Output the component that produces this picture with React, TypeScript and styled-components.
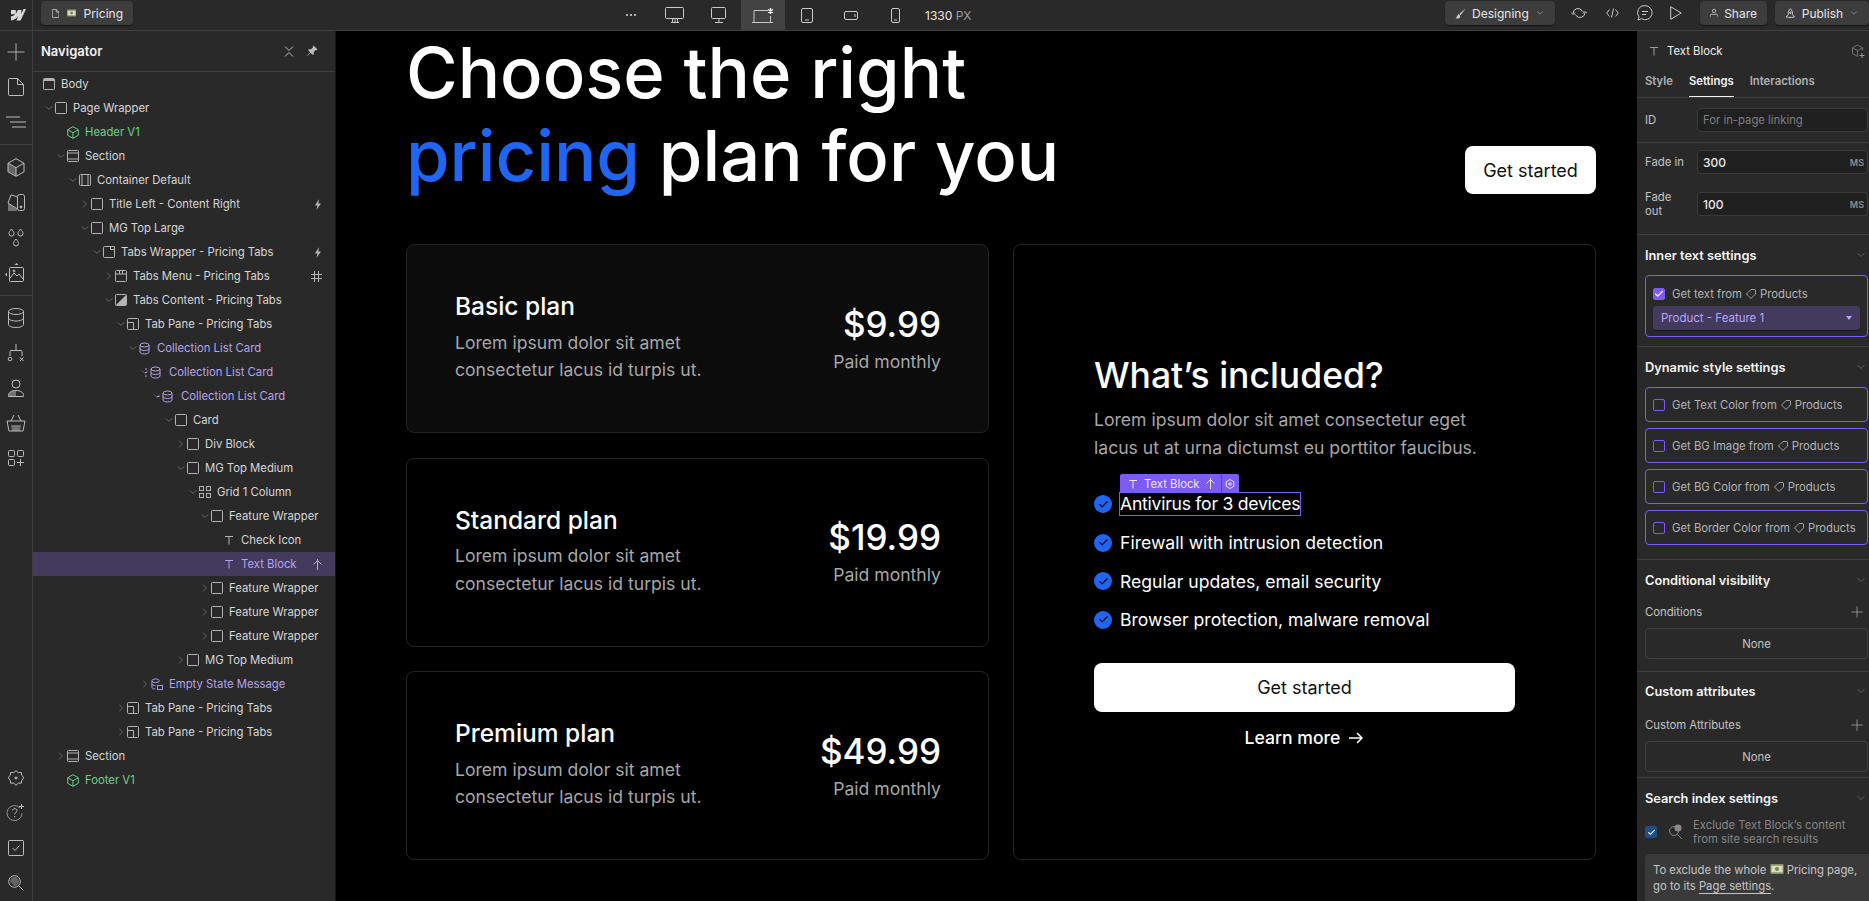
import { FC, ReactNode } from 'react';
import styled, { createGlobalStyle } from 'styled-components';
import { Check, ChevronDown, ChevronRight, Plus } from 'lucide-react';

const GlobalStyle = createGlobalStyle`
    html, body { margin: 0; padding: 0; background: #000; overflow: hidden; }
    * { box-sizing: border-box; }
    body { font-family: Inter, "Liberation Sans", sans-serif; font-size: 12px; color: #d9d9d9; }
`;

const Colors = {
    panel: '#292929',
    line: '#3f3f3f',
    purple: '#7c5cf5',
    lilac: '#b5a3ec',
    green: '#69cf8c',
    blue: '#1f66f5',
};

const Page = styled.div`
    width: 1869px;
    height: 901px;
    display: flex;
    flex-direction: column;
    overflow: hidden;
`;

/* top bar */
const TopBar = styled.header`
    height: 31px;
    flex: none;
    display: flex;
    align-items: stretch;
    background: ${Colors.panel};
    border-bottom: 1px solid ${Colors.line};
`;
const Logo = styled.div`
    width: 33px;
    display: flex;
    align-items: center;
    justify-content: center;
    border-right: 1px solid ${Colors.line};
    color: #d8d8d8;
`;
const Raised = styled.div<{ $w: number }>`
    width: ${p => p.$w}px;
    height: 24px;
    margin-top: 1px;
    display: flex;
    align-items: center;
    gap: 6px;
    padding: 0 10px;
    background: #3d3d3d;
    border-radius: 4px;
    box-shadow: 0 1px 1px rgba(0, 0, 0, 0.5);
    color: #e6e6e6;
    flex: none;
`;
const PageButton = styled(Raised)`
    margin-left: 8px;
    padding-left: 11px;
    gap: 7.5px;
`;
const Devices = styled.div`
    display: flex;
    margin-left: 476px;
    align-items: stretch;
`;
const DeviceButton = styled.div<{ $active?: boolean }>`
    width: 44px;
    display: flex;
    align-items: center;
    justify-content: center;
    color: #c9c9c9;
    background: ${p => (p.$active ? '#434343' : 'transparent')};
`;
const WidthLabel = styled.div`
    margin-left: 8px;
    align-self: center;
    color: #e6e6e6;
    span { color: #9a9a9a; }
`;
const TopRight = styled.div`
    margin-left: auto;
    display: flex;
    align-items: flex-start;
`;
const ToolIcon = styled.div<{ $w: number }>`
    width: ${p => p.$w}px;
    height: 26px;
    display: flex;
    align-items: center;
    justify-content: center;
    color: #c9c9c9;
`;
const ShareButton = styled(Raised)`
    margin-left: 17px;
    margin-right: 8px;
`;
const ButtonLabel = styled.span`
    flex: 1;
`;

/* main area */
const Main = styled.div`
    flex: 1;
    min-height: 0;
    display: flex;
`;
const Rail = styled.nav`
    width: 33px;
    flex: none;
    display: flex;
    flex-direction: column;
    background: ${Colors.panel};
    border-right: 1px solid ${Colors.line};
`;
const RailGroup = styled.div<{ $top: number; $bottom: number; $end?: boolean; $last?: boolean }>`
    padding: ${p => p.$top}px 0 ${p => p.$bottom}px;
    border-bottom: ${p => (p.$last ? 'none' : `1px solid ${Colors.line}`)};
    margin-top: ${p => (p.$end ? 'auto' : '0')};
`;
const RailIcon = styled.div`
    height: 35px;
    display: flex;
    align-items: center;
    justify-content: center;
    color: #bdbdbd;
`;

/* navigator */
const Navigator = styled.aside`
    width: 303px;
    flex: none;
    background: ${Colors.panel};
    border-right: 1px solid #171717;
    font-size: 11.3px;
`;
const NavHeader = styled.div`
    height: 41px;
    display: flex;
    align-items: center;
    padding: 0 17px 0 8px;
    border-bottom: 1px solid ${Colors.line};
    gap: 12px;
    color: #bcbcbc;
`;
const NavTitle = styled.div`
    flex: 1;
    font-size: 13px;
    font-weight: 600;
    color: #f2f2f2;
`;
const Tree = styled.div``;
const Row = styled.div<{ $depth: number; $selected?: boolean; $tone: string }>`
    height: 24px;
    display: flex;
    align-items: center;
    padding-left: ${p => 10 + 12 * p.$depth}px;
    padding-right: 13px;
    background: ${p => (p.$selected ? '#433a5e' : 'transparent')};
    color: ${p => p.$tone};
    white-space: nowrap;
`;
const Caret = styled.div`
    width: 12px;
    margin-left: -12px;
    flex: none;
    display: flex;
    align-items: center;
    justify-content: center;
    color: #a3a3a3;
`;
const NodeIcon = styled.div<{ $muted?: boolean }>`
    width: 12px;
    height: 14px;
    margin-right: 6px;
    display: flex;
    align-items: center;
    justify-content: center;
    flex: none;
    color: ${p => (p.$muted ? '#b4b4b4' : 'inherit')};
`;
const Outdent = styled.span`
    margin-left: -6px;
    display: flex;
`;
const NodeLabel = styled.div`
    flex: 1;
    padding-bottom: 1px;
`;
const Badge = styled.div`
    color: #b5b5b5;
    display: flex;
`;

/* canvas */
const Canvas = styled.main`
    width: 1301px;
    flex: none;
    background: #000;
    padding: 0 41px 0 70px;
    overflow: hidden;
    color: #fff;
`;
const Hero = styled.div`
    display: flex;
    justify-content: space-between;
    align-items: flex-end;
    margin-bottom: 47px;
`;
const Headline = styled.h1`
    margin: 0;
    font-size: 70.5px;
    line-height: 83px;
    font-weight: 450;
    color: #fff;
    span { color: ${Colors.blue}; }
`;
const WhiteButton = styled.div<{ $w: string; $h: number }>`
    width: ${p => p.$w};
    height: ${p => p.$h}px;
    background: #fff;
    color: #111;
    border-radius: 8px;
    font-size: 18px;
    display: flex;
    align-items: center;
    justify-content: center;
`;
const HeroButton = styled(WhiteButton)`
    margin-bottom: 3px;
`;
const Plans = styled.div`
    display: grid;
    grid-template-columns: 583px 583px;
    gap: 24px;
`;
const PlanStack = styled.div`
    display: flex;
    flex-direction: column;
    gap: 24.5px;
`;
const PlanCard = styled.div<{ $filled?: boolean }>`
    height: 189px;
    padding: 0 47px 0 48px;
    display: flex;
    align-items: center;
    justify-content: space-between;
    background: ${p => (p.$filled ? '#0c0c0c' : '#000')};
    border: 1px solid #232323;
    border-radius: 8px;
`;
const PlanText = styled.div`
    padding-bottom: 2.5px;
`;
const PlanTitle = styled.div`
    font-size: 24.5px;
    line-height: 30px;
    font-weight: 500;
    margin-bottom: 7.5px;
`;
const Muted = styled.div`
    font-size: 17.6px;
    line-height: 27.5px;
    color: #a6a6a6;
`;
const PriceBlock = styled.div`
    text-align: right;
`;
const Price = styled.div`
    font-size: 35px;
    line-height: 44px;
    font-weight: 500;
    margin-bottom: 2px;
`;
const Included = styled.div`
    height: 616px;
    padding: 0 80px;
    display: flex;
    flex-direction: column;
    justify-content: center;
    border: 1px solid #232323;
    border-radius: 8px;
`;
const IncludedTitle = styled.div`
    font-size: 35.5px;
    line-height: 44px;
    font-weight: 500;
    margin-bottom: 8px;
`;
const Features = styled.div`
    margin-top: 24px;
    margin-bottom: 24px;
`;
const Feature = styled.div`
    height: 38.5px;
    display: flex;
    align-items: center;
    gap: 8px;
    font-size: 17.6px;
    color: #fff;
`;
const CheckDot = styled.div`
    width: 18px;
    height: 18px;
    border-radius: 50%;
    background: ${Colors.blue};
    color: #000;
    display: flex;
    align-items: center;
    justify-content: center;
    flex: none;
`;
const SelectedText = styled.div`
    position: relative;
    outline: 1px solid ${Colors.purple};
    line-height: 22px;
    letter-spacing: -0.26px;
`;
const ElementTag = styled.div`
    position: absolute;
    left: 0;
    bottom: 100%;
    height: 19px;
    display: flex;
    align-items: center;
    background: ${Colors.purple};
    color: #ece8ff;
    font-size: 11.3px;
    letter-spacing: 0;
    border-radius: 2px 2px 0 0;
    white-space: nowrap;
`;
const TagMain = styled.div`
    display: flex;
    align-items: center;
    gap: 6px;
    padding: 0 6px 0 8px;
    border-right: 1px solid #5a3ed0;
    height: 100%;
`;
const TagGear = styled.div`
    width: 17px;
    display: flex;
    align-items: center;
    justify-content: center;
`;
const LearnMore = styled.div`
    margin-top: 14px;
    display: flex;
    align-items: center;
    justify-content: center;
    gap: 8px;
    font-size: 17.6px;
    line-height: 24px;
    font-weight: 500;
`;

/* settings panel */
const Settings = styled.aside`
    width: 232px;
    flex: none;
    background: ${Colors.panel};
    overflow: hidden;
    font-size: 11.3px;
`;
const PanelHead = styled.div`
    height: 67px;
    border-bottom: 1px solid ${Colors.line};
`;
const ElementRow = styled.div`
    height: 40px;
    display: flex;
    align-items: center;
    padding: 0 4px 0 12px;
    gap: 8px;
    color: #efefef;
    svg { color: #9d9d9d; }
`;
const ElementName = styled.div`
    flex: 1;
`;
const Tabs = styled.div`
    height: 26px;
    display: flex;
    gap: 16px;
    padding-left: 8px;
`;
const Tab = styled.div<{ $active?: boolean }>`
    height: 26px;
    padding-top: 3px;
    font-weight: 600;
    color: ${p => (p.$active ? '#f2f2f2' : '#b0b0b0')};
    border-bottom: ${p => (p.$active ? '1px solid #f2f2f2' : 'none')};
`;
const Section = styled.section<{ $h: number }>`
    display: flow-root;
    height: ${p => p.$h}px;
    padding: 0 0 0 8px;
    border-bottom: 1px solid ${Colors.line};
`;
const FieldRow = styled.div<{ $top: number }>`
    display: flex;
    align-items: center;
    margin-top: ${p => p.$top}px;
    height: 24px;
`;
const FieldLabel = styled.div`
    width: 52px;
    flex: none;
    line-height: 14px;
    color: #c4c4c4;
`;
const Field = styled.div`
    flex: 1;
    height: 24px;
    display: flex;
    align-items: center;
    justify-content: space-between;
    padding: 0 3px 0 5px;
    margin-right: 1px;
    background: #202020;
    border: 1px solid #3a3a3a;
    border-radius: 4px;
    color: #e8e8e8;
`;
const FieldValue = styled.span`
    font-size: 12px;
    font-weight: 500;
`;
const Placeholder = styled.span`
    color: #7f7f7f;
`;
const Unit = styled.span`
    font-size: 9px;
    font-weight: 600;
    color: #8e8e8e;
`;
const SectionHead = styled.div<{ $top: number }>`
    height: 16px;
    margin-top: ${p => p.$top}px;
    display: flex;
    align-items: center;
    justify-content: space-between;
    padding-right: 2px;
    font-size: 12.8px;
    font-weight: 600;
    color: #f4f4f4;
    svg { color: #9a9a9a; }
`;
const BindBox = styled.div<{ $h: number; $top: number }>`
    height: ${p => p.$h}px;
    margin-top: ${p => p.$top}px;
    margin-right: 1px;
    padding: 0 7px;
    border: 1px solid ${Colors.purple};
    border-radius: 4px;
    display: flex;
    flex-direction: column;
    justify-content: center;
`;
const BindRow = styled.div`
    display: flex;
    align-items: center;
    height: 24px;
    color: #b4b4b4;
    white-space: nowrap;
`;
const Box = styled.div<{ $on?: boolean }>`
    width: 12px;
    height: 12px;
    margin-right: 7px;
    flex: none;
    border-radius: 2px;
    border: 1px solid ${Colors.purple};
    background: ${p => (p.$on ? Colors.purple : 'transparent')};
    color: #fff;
    display: flex;
    align-items: center;
    justify-content: center;
`;
const TagGlyph = styled.span`
    margin: 0 4px;
    display: inline-flex;
    color: #a0a0a0;
`;
const BindSelect = styled.div`
    height: 24px;
    display: flex;
    align-items: center;
    justify-content: space-between;
    padding: 0 8px;
    background: #433a5e;
    border-radius: 3px;
    color: #b9a6f4;
    font-size: 11.5px;
    box-shadow: 0 1px 1px rgba(0, 0, 0, 0.5);
`;
const Triangle = styled.div`
    width: 0;
    height: 0;
    border-left: 3.5px solid transparent;
    border-right: 3.5px solid transparent;
    border-top: 4px solid #b9a6f4;
`;
const LabelRow = styled.div<{ $top: number }>`
    height: 16px;
    margin-top: ${p => p.$top}px;
    padding-right: 3px;
    display: flex;
    align-items: center;
    justify-content: space-between;
    color: #c4c4c4;
    svg { color: #a5a5a5; }
`;
const NoneBox = styled.div<{ $top: number }>`
    height: 31px;
    margin-top: ${p => p.$top}px;
    margin-right: 1px;
    display: flex;
    align-items: center;
    justify-content: center;
    border: 1px solid #3f3f3f;
    border-radius: 4px;
    color: #c4c4c4;
`;
const ExcludeRow = styled.div`
    margin-top: 12px;
    display: flex;
    align-items: center;
    gap: 10px;
    line-height: 14px;
    color: #858585;
`;
const BlueCheck = styled.div`
    width: 12px;
    height: 12px;
    flex: none;
    border-radius: 2px;
    background: #1d4f86;
    color: #cfe3fb;
    display: flex;
    align-items: center;
    justify-content: center;
`;
const ExcludeIcon = styled.div`
    width: 16px;
    flex: none;
    display: flex;
    color: #8b8b8b;
`;
const Note = styled.div`
    margin: 8px 0 0;
    padding: 8px 8px 0;
    height: 60px;
    line-height: 16px;
    background: #3a3a3a;
    border-radius: 4px 0 0 0;
    color: #c6c6c6;
    white-space: nowrap;
    u { text-underline-offset: 3px; }
`;

/* drawings */
const Svg: FC<{ w?: number; h?: number; box?: string; children: ReactNode }> = ({ w = 14, h = 14, box, children }) => (
    <svg width={w} height={h} viewBox={box || `0 0 ${w} ${h}`} fill="none" stroke="currentColor" strokeWidth="1">
        {children}
    </svg>
);

const WLogo = () => (
    <svg width="20" height="12" viewBox="0 0 20 12" fill="currentColor">
        <path d="M20 0l-5.400 11.600h-4.200l1.900-4.600h-.1C10.600 9.600 8.300 11 5 11.600V7.300s2.700-.2 4.300-2H5V1h4.800v3.800h.1L11.800 1h3.600v3.800h.1L17.500 0z" />
    </svg>
);
const Bill = () => (
    <svg width="14" height="10" viewBox="0 0 12 9">
        <rect width="12" height="9" rx="1" fill="#8c8f64" />
        <rect x="1" y="1.500" width="10" height="6" fill="#d9dcc4" />
        <circle cx="6" cy="4.500" r="1.800" fill="#6f8a4a" />
    </svg>
);
const BodyIcon = () => <Svg w={12} h={12}><rect x=".5" y=".5" width="11" height="11" rx="1" /><rect x="1" y="1" width="10" height="2" fill="currentColor" stroke="none" /></Svg>;
const BoxIcon = () => <Svg w={12} h={12}><rect x=".5" y=".5" width="11" height="11" rx="1" /></Svg>;
const ComponentIcon = () => <Svg w={12} h={13}><path d="M6 .7l5.300 3v5.600L6 12.300.7 9.300V3.700zM.7 3.700L6 6.700l5.300-3M6 6.700v5.600" /></Svg>;
const SectionIcon = () => <Svg w={12} h={12}><rect x=".5" y=".5" width="11" height="11" rx="1" /><path d="M1 3h10M1 9h10" /></Svg>;
const ContainerIcon = () => <Svg w={12} h={12}><rect x=".5" y=".5" width="11" height="11" rx="1" /><path d="M3 1v10M9 1v10" /></Svg>;
const TabsWrapIcon = () => <Svg w={12} h={12}><path d="M.5 1.500a1 1 0 0 1 1-1h10v10a1 1 0 0 1-1 1h-9a1 1 0 0 1-1-1zM7.500.5v3h4" /></Svg>;
const TabsMenuIcon = () => <Svg w={12} h={12}><rect x=".5" y=".5" width="11" height="11" rx="1" /><path d="M1 4h10M4.500 1v3M7.500 1v3" /></Svg>;
const TabsContentIcon = () => <Svg w={12} h={12}><rect x=".5" y=".5" width="11" height="11" rx="1" /><path d="M11 1v10H1z" fill="currentColor" stroke="none" /></Svg>;
const TabPaneIcon = () => <Svg w={12} h={12}><rect x=".5" y=".5" width="11" height="11" rx="1" /><path d="M1 4.500h5.500V11" /></Svg>;
const DbPath = ({ x = 0 }: { x?: number }) => (
    <g transform={`translate(${x} 0)`}>
        <ellipse cx="5.500" cy="3" rx="4.500" ry="2" />
        <path d="M1 3v7c0 1.100 2 2 4.500 2s4.500-.9 4.500-2V3M1 6.500c0 1.100 2 2 4.500 2s4.500-.9 4.500-2" />
    </g>
);
const DbIcon = () => <Svg w={12} h={13}><DbPath /></Svg>;
const DbListIcon = () => (
    <Outdent>
        <Svg w={18} h={13}><path d="M0 3h2M0 6.500h2M0 10h2" /><DbPath x={5} /></Svg>
    </Outdent>
);
const DbItemIcon = () => (
    <Outdent>
        <Svg w={18} h={13}><path d="M0 6.500h2.500" /><DbPath x={5} /></Svg>
    </Outdent>
);
const EmptyIcon = () => <Svg w={13} h={13}><ellipse cx="5" cy="2.500" rx="4" ry="2" /><path d="M1 2.500v7c0 1 1.500 1.800 3.500 1.800M1 6c0 1 1.800 1.800 4 1.800" /><rect x="7" y="7.500" width="5.500" height="4.500" /></Svg>;
const GridIcon = () => <Svg w={12} h={12}><rect x=".5" y=".5" width="4" height="4" /><rect x="7.500" y=".5" width="4" height="4" /><rect x=".5" y="7.500" width="4" height="4" /><rect x="7.500" y="7.500" width="4" height="4" /></Svg>;
const TIcon = () => <Svg w={10} h={10}><path d="M1 1.500h8M5 1.500V9.500" /></Svg>;
const Bolt = () => <svg width="8" height="11" viewBox="0 0 8 11" fill="currentColor"><path d="M5 0L1 6.500h2.500L2.500 11l4.500-6.500H4.300z" /></svg>;
const Hash = () => <Svg w={11} h={11}><path d="M3.500 0v11M7.500 0v11M0 3.500h11M0 7.500h11" /></Svg>;
const Branch = () => <Svg w={9} h={11}><path d="M4.500 0v11M.5 5.500L4.500 1.500l4 4" /></Svg>;
const Pin = () => <svg width="12" height="12" viewBox="0 0 12 12" fill="currentColor"><path d="M7.500.5l4 4-1 .7-.8-.2-2 2 .1 2.300-.8.7-2.300-2.300L1.200 11l-.2-.2 3.200-3.600L2 5l.7-.8 2.300.1 2-2-.2-.8z" /></svg>;
const Collapse = () => <Svg w={10} h={11}><path d="M1 .5l4 4 4-4M1 10.500l4-4 4 4" /></Svg>;
const PriceTag = () => <Svg w={10} h={10}><path d="M9.500 1v4L5 9.500.5 5 5 .5h4z" /></Svg>;

const MonitorLg = () => <Svg w={20} h={16}><rect x=".5" y=".5" width="18" height="11" rx="1" /><path d="M6 15.500h8M7.500 12v3.500M10 12v3.500M12.500 12v3.500" /></Svg>;
const Monitor = () => <Svg w={16} h={16}><rect x=".5" y=".5" width="14" height="11" rx="1" /><path d="M4 15.500h8M8 12v3.500" /></Svg>;
const LaptopStar = () => (
    <svg width="24" height="16" viewBox="0 0 24 16" fill="none" stroke="currentColor">
        <path d="M3 15V3.500h14M1 15.500h21M19.500 9v6" />
        <path d="M19.500 1v6M17 2.500l5 3M22 2.500l-5 3" stroke="#fff" strokeWidth="1.300" />
    </svg>
);
const Tablet = () => <Svg w={12} h={15}><rect x=".5" y=".5" width="11" height="14" rx="1.500" /><path d="M4 12h4" /></Svg>;
const Landscape = () => <Svg w={14} h={9}><rect x=".5" y=".5" width="13" height="8" rx="1.500" /><path d="M11 3v3" /></Svg>;
const Phone = () => <Svg w={9} h={15}><rect x=".5" y=".5" width="8" height="14" rx="1.500" /><path d="M3 12h3" /></Svg>;

const railTop = [
    <Plus key="a" size={28} strokeWidth={0.75} />,
    <Svg key="b" w={16} h={18}><path d="M.5 1.500a1 1 0 0 1 1-1h8l6 6v10a1 1 0 0 1-1 1h-13a1 1 0 0 1-1-1zM9.500.5v6h6" /></Svg>,
    <Svg key="c" w={20} h={12}><path d="M0 1h14M4 6h16M6 11h14" /></Svg>,
];
const railBuild = [
    <Svg key="a" w={18} h={19}><path d="M9 .7l8 4.500v8.600l-8 4.500-8-4.500V5.200zM1 5.200l8 4.500 8-4.500M9 9.700v8.600" /><path d="M1 5.500l8 4.500v8L1 13.500z" fill="currentColor" opacity=".4" stroke="none" /></Svg>,
    <Svg key="b" w={18} h={18}><rect x="10.500" y=".5" width="7" height="16" rx="2" /><path d="M10.500 3L4 .8 1 9l9.500 6" /><path d="M1 9l9 6.500V17H1z" fill="currentColor" opacity=".5" stroke="none" /><circle cx="14" cy="13" r="1" fill="currentColor" /></Svg>,
    <Svg key="c" w={18} h={20}><path d="M4.500 1C3 3 2 4.200 2 5.500a2.500 2.500 0 0 0 5 0C7 4.200 6 3 4.500 1zM13.500 1c-1.500 2-2.500 3.200-2.500 4.500a2.500 2.500 0 0 0 5 0c0-1.300-1-2.500-2.500-4.500zM9 11c-1.500 2-2.500 3.200-2.500 4.500a2.500 2.500 0 0 0 5 0c0-1.300-1-2.500-2.500-4.500z" /></Svg>,
    <Svg key="d" w={22} h={20}><rect x="4.500" y="4.500" width="14" height="14" rx="1" /><path d="M5 15l4-5 3 3 2-2 4 5" /><circle cx="9" cy="8" r="1" /><path d="M11.500 0l2 2h-4zM0 11.500l2-2v4z" fill="currentColor" stroke="none" /></Svg>,
];
const railData = [
    <Svg key="a" w={16} h={20}><ellipse cx="8" cy="3.500" rx="7.500" ry="3" /><path d="M.5 3.500v13c0 1.700 3.400 3 7.500 3s7.500-1.300 7.500-3v-13M.5 10c0 1.700 3.400 3 7.500 3s7.500-1.300 7.500-3" /></Svg>,
    <Svg key="b" w={18} h={18}><path d="M9 0v6M3 12V7.500a1 1 0 0 1 1-1h10a1 1 0 0 1 1 1V12" /><circle cx="3" cy="15" r="1.800" /><path d="M13 13.500l3.500 3.500M16.500 13.500L13 17" /></Svg>,
    <Svg key="c" w={16} h={18}><circle cx="8" cy="5" r="4" /><path d="M.5 17.500v-1c0-3 3-5 7.500-5s7.500 2 7.500 5v1z" /><path d="M8 11.500v6H.5v-1c0-3 3-5 7.500-5z" fill="currentColor" opacity=".5" stroke="none" /></Svg>,
    <Svg key="d" w={20} h={18}><path d="M1 7h18l-2 10H3zM5 7l3-6M15 7l-3-6" /><path d="M5 11h10l-1 6H6z" fill="currentColor" opacity=".5" stroke="none" /></Svg>,
    <Svg key="e" w={16} h={16}><rect x=".5" y=".5" width="6" height="6" rx="1" /><rect x="9.500" y=".5" width="6" height="6" rx="1" /><rect x=".5" y="9.500" width="6" height="6" rx="1" /><path d="M12.500 9v7M9 12.500h7" /></Svg>,
];
const railBottom = [
    <Svg key="a" w={16} h={16}><path d="M8 .7l2.300 2 3-.3.5 3 2 2.400-2 2.400-.5 3-3-.1L8 15.300l-2.300-2.200-3 .1-.5-3L.2 7.800l2-2.400.5-3 3 .3z" /><circle cx="8" cy="8" r="1" fill="currentColor" /></Svg>,
    <svg key="b" width="20" height="20" viewBox="0 0 20 20" fill="none" stroke="currentColor"><path d="M14 5A7.500 7.500 0 1 0 16 10" opacity=".7" /><path d="M6.500 7.500c.4-2.500 4.500-2.500 4.500 0 0 1.800-2.200 1.800-2.200 3.800M8.800 13v1.200" /><path d="M15.500 1v5M13 3.500h5" /></svg>,
    <Svg key="c" w={16} h={16}><rect x=".5" y=".5" width="15" height="15" rx="1" /><path d="M4.500 8l2.500 2.500 4.500-5" /></Svg>,
    <Svg key="d" w={16} h={16}><circle cx="6.500" cy="6.500" r="5.800" /><path d="M10.500 10.500L15.500 15.500" /><path d="M2 6.500a4.500 4.500 0 0 1 4.500-4.500 4.500 4.500 0 0 1 0 9z" fill="currentColor" opacity=".4" stroke="none" /></Svg>,
];

type Node = {
    label: string;
    depth: number;
    icon: ReactNode;
    open?: boolean;
    tone?: string;
    selected?: boolean;
    badge?: ReactNode;
};

const defaultTone = '#d6d6d6';

const tree: Node[] = [
    { label: 'Body', depth: 0, icon: <BodyIcon /> },
    { label: 'Page Wrapper', depth: 1, icon: <BoxIcon />, open: true },
    { label: 'Header V1', depth: 2, icon: <ComponentIcon />, tone: Colors.green },
    { label: 'Section', depth: 2, icon: <SectionIcon />, open: true },
    { label: 'Container Default', depth: 3, icon: <ContainerIcon />, open: true },
    { label: 'Title Left - Content Right', depth: 4, icon: <BoxIcon />, open: false, badge: <Bolt /> },
    { label: 'MG Top Large', depth: 4, icon: <BoxIcon />, open: true },
    { label: 'Tabs Wrapper - Pricing Tabs', depth: 5, icon: <TabsWrapIcon />, open: true, badge: <Bolt /> },
    { label: 'Tabs Menu - Pricing Tabs', depth: 6, icon: <TabsMenuIcon />, open: false, badge: <Hash /> },
    { label: 'Tabs Content - Pricing Tabs', depth: 6, icon: <TabsContentIcon />, open: true },
    { label: 'Tab Pane - Pricing Tabs', depth: 7, icon: <TabPaneIcon />, open: true },
    { label: 'Collection List Card', depth: 8, icon: <DbIcon />, open: true, tone: Colors.lilac },
    { label: 'Collection List Card', depth: 9, icon: <DbListIcon />, open: true, tone: Colors.lilac },
    { label: 'Collection List Card', depth: 10, icon: <DbItemIcon />, open: true, tone: Colors.lilac },
    { label: 'Card', depth: 11, icon: <BoxIcon />, open: true },
    { label: 'Div Block', depth: 12, icon: <BoxIcon />, open: false },
    { label: 'MG Top Medium', depth: 12, icon: <BoxIcon />, open: true },
    { label: 'Grid 1 Column', depth: 13, icon: <GridIcon />, open: true },
    { label: 'Feature Wrapper', depth: 14, icon: <BoxIcon />, open: true },
    { label: 'Check Icon', depth: 15, icon: <TIcon /> },
    { label: 'Text Block', depth: 15, icon: <TIcon />, selected: true, tone: Colors.lilac, badge: <Branch /> },
    { label: 'Feature Wrapper', depth: 14, icon: <BoxIcon />, open: false },
    { label: 'Feature Wrapper', depth: 14, icon: <BoxIcon />, open: false },
    { label: 'Feature Wrapper', depth: 14, icon: <BoxIcon />, open: false },
    { label: 'MG Top Medium', depth: 12, icon: <BoxIcon />, open: false },
    { label: 'Empty State Message', depth: 9, icon: <EmptyIcon />, open: false, tone: Colors.lilac },
    { label: 'Tab Pane - Pricing Tabs', depth: 7, icon: <TabPaneIcon />, open: false },
    { label: 'Tab Pane - Pricing Tabs', depth: 7, icon: <TabPaneIcon />, open: false },
    { label: 'Section', depth: 2, icon: <SectionIcon />, open: false },
    { label: 'Footer V1', depth: 2, icon: <ComponentIcon />, tone: Colors.green },
];

const plans = [
    { name: 'Basic plan', price: '$9.99', filled: true },
    { name: 'Standard plan', price: '$19.99' },
    { name: 'Premium plan', price: '$49.99' },
];

const features = ['Firewall with intrusion detection', 'Regular updates, email security', 'Browser protection, malware removal'];
const bindings = ['Get Text Color from', 'Get BG Image from', 'Get BG Color from', 'Get Border Color from'];

const TickDot = () => (
    <CheckDot>
        <Check size={11} strokeWidth={2.5} />
    </CheckDot>
);

const PanelChevron = () => <ChevronDown size={12} strokeWidth={1} />;
const AddIcon = () => <Plus size={18} strokeWidth={1} />;

export default function App() {
    return (
        <Page>
            <GlobalStyle />
            <TopBar>
                <Logo><WLogo /></Logo>
                <PageButton $w={92}>
                    <Svg w={11} h={13}><path d="M.5 1.500a1 1 0 0 1 1-1h5l4 4v7a1 1 0 0 1-1 1h-8a1 1 0 0 1-1-1zM6.500.5v4h4" /></Svg>
                    <Bill />
                    <span>Pricing</span>
                </PageButton>
                <Devices>
                    <DeviceButton>
                        <Svg w={12} h={4}><circle cx="2" cy="2" r=".7" fill="currentColor" /><circle cx="6" cy="2" r=".7" fill="currentColor" /><circle cx="10" cy="2" r=".7" fill="currentColor" /></Svg>
                    </DeviceButton>
                    <DeviceButton><MonitorLg /></DeviceButton>
                    <DeviceButton><Monitor /></DeviceButton>
                    <DeviceButton $active><LaptopStar /></DeviceButton>
                    <DeviceButton><Tablet /></DeviceButton>
                    <DeviceButton><Landscape /></DeviceButton>
                    <DeviceButton><Phone /></DeviceButton>
                    <WidthLabel>1330 <span>PX</span></WidthLabel>
                </Devices>
                <TopRight>
                    <Raised $w={110}>
                        <svg width="13" height="13" viewBox="0 0 13 13" fill="currentColor"><path d="M12.500.5L5 7l1.500 1.500zM4.500 7.500C2.500 8 3 11 .5 12c3 1 6 0 5.500-3z" opacity=".85" /></svg>
                        <ButtonLabel>Designing</ButtonLabel>
                        <ChevronDown size={12} strokeWidth={1} />
                    </Raised>
                    <ToolIcon $w={48}>
                        <Svg w={16} h={12}><path d="M2 6.500a5 5 0 0 1 9-3l1.500 1.500M14 5.500a5 5 0 0 1-9 3L3.500 7M0 5.500l2 2 2-2M12 6.500l2-2 2 2" /></Svg>
                    </ToolIcon>
                    <ToolIcon $w={18}>
                        <Svg w={13} h={10}><path d="M3.500 1.500L.7 5l2.800 3.500M9.500 1.500L12.300 5 9.500 8.500M7.500.5l-2 9" /></Svg>
                    </ToolIcon>
                    <ToolIcon $w={47}>
                        <Svg w={16} h={16}><path d="M8 .7a7 7 0 1 1-3.500 13L1 15l1-3A7 7 0 0 1 8 .7zM5 6.500h6M5 9.500h4" /></Svg>
                    </ToolIcon>
                    <ToolIcon $w={15}>
                        <Svg w={12} h={14}><path d="M.7.7l10.500 6.300L.7 13.300z" /></Svg>
                    </ToolIcon>
                    <ShareButton $w={67}>
                        <Svg w={12} h={12}><circle cx="6" cy="3" r="2.500" /><path d="M.5 11.500v-1.500a2 2 0 0 1 2-2h7a2 2 0 0 1 2 2v1.500" /></Svg>
                        <span>Share</span>
                    </ShareButton>
                    <Raised $w={94}>
                        <Svg w={13} h={13}><path d="M6.500.7c2 2 3 4 2.500 7l2.500 3-3 .5h-4l-3-.5L4 7.700c-.5-3 .5-5 2.500-7z" /><circle cx="6.500" cy="5.500" r="1" /></Svg>
                        <ButtonLabel>Publish</ButtonLabel>
                        <ChevronDown size={12} strokeWidth={1} />
                    </Raised>
                </TopRight>
            </TopBar>

            <Main>
                <Rail>
                    <RailGroup $top={3} $bottom={5}>{railTop.map((icon, i) => <RailIcon key={i}>{icon}</RailIcon>)}</RailGroup>
                    <RailGroup $top={5} $bottom={5}>{railBuild.map((icon, i) => <RailIcon key={i}>{icon}</RailIcon>)}</RailGroup>
                    <RailGroup $top={4} $bottom={0} $last>{railData.map((icon, i) => <RailIcon key={i}>{icon}</RailIcon>)}</RailGroup>
                    <RailGroup $top={0} $bottom={1} $end $last>{railBottom.map((icon, i) => <RailIcon key={i}>{icon}</RailIcon>)}</RailGroup>
                </Rail>

                <Navigator>
                    <NavHeader>
                        <NavTitle>Navigator</NavTitle>
                        <Collapse />
                        <Pin />
                    </NavHeader>
                    <Tree>
                        {tree.map((node, i) => (
                            <Row key={i} $depth={node.depth} $selected={node.selected} $tone={node.tone || defaultTone}>
                                {node.open !== undefined && (
                                    <Caret>
                                        {node.open ? <ChevronDown size={14} strokeWidth={1} /> : <ChevronRight size={14} strokeWidth={1} />}
                                    </Caret>
                                )}
                                <NodeIcon $muted={!node.tone}>{node.icon}</NodeIcon>
                                <NodeLabel>{node.label}</NodeLabel>
                                {node.badge && <Badge>{node.badge}</Badge>}
                            </Row>
                        ))}
                    </Tree>
                </Navigator>

                <Canvas>
                    <Hero>
                        <Headline>Choose the right<br /><span>pricing</span> plan for you</Headline>
                        <HeroButton $w="131px" $h={48}>Get started</HeroButton>
                    </Hero>
                    <Plans>
                        <PlanStack>
                            {plans.map(plan => (
                                <PlanCard key={plan.name} $filled={plan.filled}>
                                    <PlanText>
                                        <PlanTitle>{plan.name}</PlanTitle>
                                        <Muted>Lorem ipsum dolor sit amet<br />consectetur lacus id turpis ut.</Muted>
                                    </PlanText>
                                    <PriceBlock>
                                        <Price>{plan.price}</Price>
                                        <Muted>Paid monthly</Muted>
                                    </PriceBlock>
                                </PlanCard>
                            ))}
                        </PlanStack>
                        <Included>
                            <IncludedTitle>What’s included?</IncludedTitle>
                            <Muted>Lorem ipsum dolor sit amet consectetur eget<br />lacus ut at urna dictumst eu porttitor faucibus.</Muted>
                            <Features>
                                <Feature>
                                    <TickDot />
                                    <SelectedText>
                                        <ElementTag>
                                            <TagMain><TIcon /><span>Text Block</span><Branch /></TagMain>
                                            <TagGear><Svg w={10} h={10}><path d="M5 .5l3.800 2.200v4.600L5 9.500 1.200 7.300V2.700z" /><circle cx="5" cy="5" r="1.300" /></Svg></TagGear>
                                        </ElementTag>
                                        Antivirus for 3 devices
                                    </SelectedText>
                                </Feature>
                                {features.map(text => (
                                    <Feature key={text}>
                                        <TickDot />
                                        <span>{text}</span>
                                    </Feature>
                                ))}
                            </Features>
                            <WhiteButton $w="100%" $h={49}>Get started</WhiteButton>
                            <LearnMore>
                                Learn more
                                <svg width="16" height="14" viewBox="0 0 16 14" fill="none" stroke="currentColor" strokeWidth="1.500"><path d="M1 7h13M9 2l5 5-5 5" /></svg>
                            </LearnMore>
                        </Included>
                    </Plans>
                </Canvas>

                <Settings>
                    <PanelHead>
                        <ElementRow>
                            <TIcon />
                            <ElementName>Text Block</ElementName>
                            <Svg w={14} h={14}><path d="M6.500 1l5 2.800v3M1.500 3.800L6.500 1M1.500 3.800v5.800l5 2.800M1.500 3.800l5 2.800 5-2.800M6.500 6.600v5.800" opacity=".6" /><path d="M11 9v5M8.500 11.500h5" /></Svg>
                        </ElementRow>
                        <Tabs>
                            <Tab>Style</Tab>
                            <Tab $active>Settings</Tab>
                            <Tab>Interactions</Tab>
                        </Tabs>
                    </PanelHead>
                    <Section $h={45}>
                        <FieldRow $top={10}>
                            <FieldLabel>ID</FieldLabel>
                            <Field><Placeholder>For in-page linking</Placeholder></Field>
                        </FieldRow>
                    </Section>
                    <Section $h={92}>
                        <FieldRow $top={7}>
                            <FieldLabel>Fade in</FieldLabel>
                            <Field><FieldValue>300</FieldValue><Unit>MS</Unit></Field>
                        </FieldRow>
                        <FieldRow $top={18}>
                            <FieldLabel>Fade<br />out</FieldLabel>
                            <Field><FieldValue>100</FieldValue><Unit>MS</Unit></Field>
                        </FieldRow>
                    </Section>
                    <Section $h={112}>
                        <SectionHead $top={12}>Inner text settings <PanelChevron /></SectionHead>
                        <BindBox $h={62} $top={12}>
                            <BindRow>
                                <Box $on><Check size={10} strokeWidth={3} /></Box>
                                Get text from <TagGlyph><PriceTag /></TagGlyph> Products
                            </BindRow>
                            <BindSelect>Product - Feature 1 <Triangle /></BindSelect>
                        </BindBox>
                    </Section>
                    <Section $h={213}>
                        <SectionHead $top={12}>Dynamic style settings <PanelChevron /></SectionHead>
                        {bindings.map((text, i) => (
                            <BindBox key={text} $h={35} $top={i === 0 ? 12 : 6}>
                                <BindRow>
                                    <Box />
                                    {text} <TagGlyph><PriceTag /></TagGlyph> Products
                                </BindRow>
                            </BindBox>
                        ))}
                    </Section>
                    <Section $h={112}>
                        <SectionHead $top={12}>Conditional visibility <PanelChevron /></SectionHead>
                        <LabelRow $top={16}>Conditions <AddIcon /></LabelRow>
                        <NoneBox $top={8}>None</NoneBox>
                    </Section>
                    <Section $h={106}>
                        <SectionHead $top={11}>Custom attributes <PanelChevron /></SectionHead>
                        <LabelRow $top={18}>Custom Attributes <AddIcon /></LabelRow>
                        <NoneBox $top={8}>None</NoneBox>
                    </Section>
                    <Section $h={140}>
                        <SectionHead $top={12}>Search index settings <PanelChevron /></SectionHead>
                        <ExcludeRow>
                            <BlueCheck><Check size={9} strokeWidth={3} /></BlueCheck>
                            <ExcludeIcon>
                                <Svg w={16} h={16}><circle cx="7" cy="7" r="4.500" /><path d="M10.500 10.500L15 15" /><circle cx="11" cy="4" r="3.500" fill="currentColor" stroke="none" /></Svg>
                            </ExcludeIcon>
                            <span>Exclude Text Block’s content<br />from site search results</span>
                        </ExcludeRow>
                        <Note>To exclude the whole <Bill /> Pricing page,<br />go to its <u>Page settings</u>.</Note>
                    </Section>
                </Settings>
            </Main>
        </Page>
    );
}
